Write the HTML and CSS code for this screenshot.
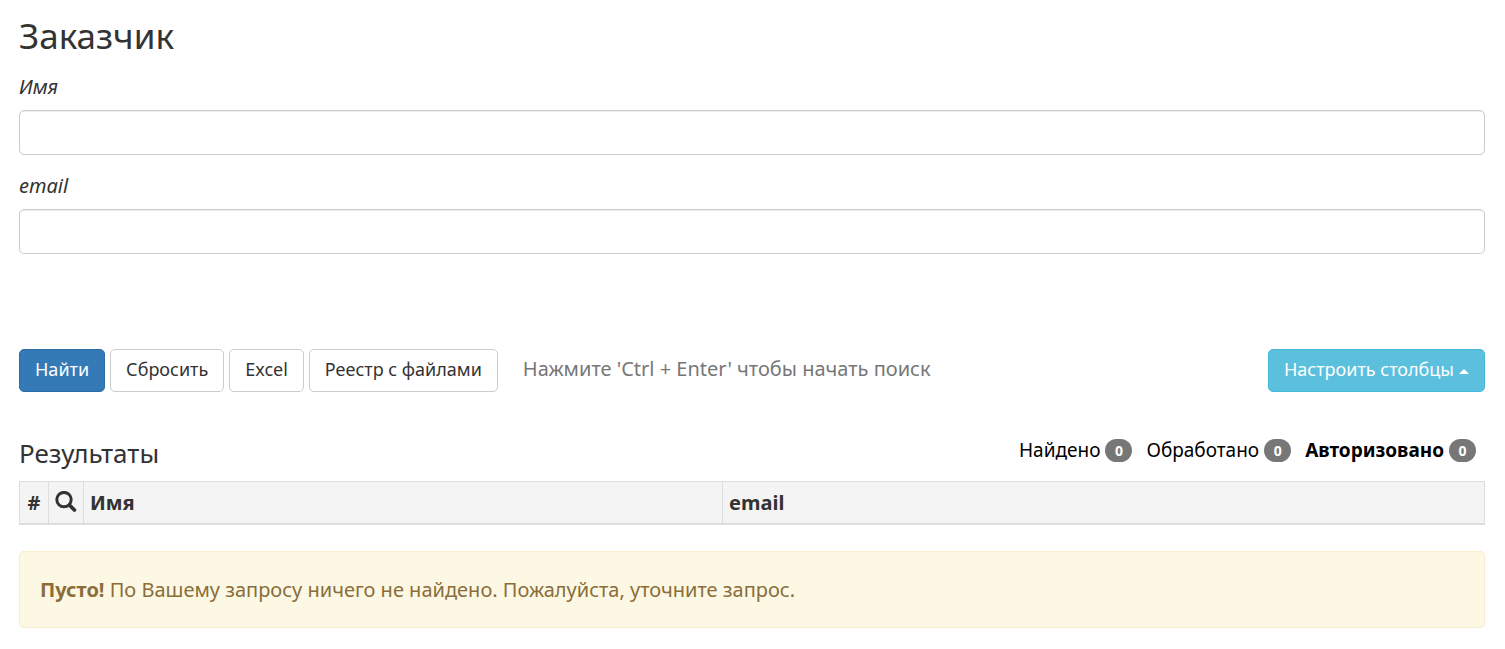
FILE: index.html
```html
<!DOCTYPE html>
<html lang="ru">
<head>
<meta charset="utf-8">
<title>Заказчик</title>
<link rel="stylesheet" href="styles.css">
</head>
<body>
<main class="page">
  <form class="search">
    <h1 class="title">Заказчик</h1>
    <div class="field">
      <label class="field-label" for="name">Имя</label>
      <input class="field-input" id="name" type="text">
    </div>
    <div class="field">
      <label class="field-label" for="email">email</label>
      <input class="field-input" id="email" type="text">
    </div>
    <div class="toolbar">
      <button class="btn btn-primary" type="submit">Найти</button>
      <button class="btn" type="reset">Сбросить</button>
      <button class="btn" type="button">Excel</button>
      <button class="btn" type="button">Реестр с файлами</button>
      <span class="hint">Нажмите 'Ctrl + Enter' чтобы начать поиск</span>
      <button class="btn btn-info" type="button">Настроить столбцы<span class="caret"></span></button>
    </div>
  </form>
  <section class="results">
    <div class="results-head">
      <h2 class="results-title">Результаты</h2>
      <div class="counters">
        <span class="counter">Найдено <span class="badge">0</span></span>
        <span class="counter">Обработано <span class="badge">0</span></span>
        <strong class="counter">Авторизовано <span class="badge">0</span></strong>
      </div>
    </div>
    <table class="grid">
      <thead>
        <tr>
          <th class="col-num">#</th>
          <th class="col-view"><svg class="icon" viewBox="0 0 22 22" role="img" aria-label="Просмотр"><circle cx="9" cy="8.6" r="7.2" fill="none" stroke="currentColor" stroke-width="3"/><path d="M14.4 14l5 5" fill="none" stroke="currentColor" stroke-width="3.8" stroke-linecap="round"/></svg></th>
          <th class="col-name">Имя</th>
          <th>email</th>
        </tr>
      </thead>
    </table>
    <div class="alert" role="alert"><strong>Пусто!</strong> По Вашему запросу ничего не найдено. Пожалуйста, уточните запрос.</div>
  </section>
</main>
</body>
</html>
```
FILE: styles.css
```css
* {
  box-sizing: border-box;
}

body {
  margin: 0;
  background: #fff;
  color: #333;
  font-family: "Noto Sans", sans-serif;
  font-size: 20px;
  line-height: 27px;
}

.page {
  padding: 16px 20px 20px 19px;
}

.title {
  margin: 0 0 17px;
  font-size: 35px;
  font-weight: 400;
  line-height: 40px;
}

.field {
  display: flex;
  flex-direction: column;
  gap: 10px;
  margin-bottom: 17px;
}

.field-label {
  font-style: italic;
}

.field-input {
  width: 100%;
  height: 45px;
  padding: 8px 16px;
  border: 1px solid #ccc;
  border-radius: 5px;
  background: #fff;
  box-shadow: inset 0 1px 1px rgba(0, 0, 0, 0.075);
  color: #555;
  font: inherit;
}

.toolbar {
  display: flex;
  align-items: center;
  gap: 5px;
  margin-top: 95px;
}

.btn {
  display: flex;
  align-items: center;
  height: 43px;
  padding: 0 15px 2px;
  border: 1px solid #ccc;
  border-radius: 5px;
  background: #fff;
  color: #333;
  font: inherit;
  font-size: 18px;
  white-space: nowrap;
}

.btn-primary {
  border-color: #2e6da4;
  background: #337ab7;
  color: #fff;
}

.btn-info {
  gap: 5px;
  margin-left: auto;
  border-color: #46b8da;
  background: #5bc0de;
  color: #fff;
}

.caret {
  margin-top: 4px;
  border-right: 5px solid transparent;
  border-bottom: 5px solid #fff;
  border-left: 5px solid transparent;
}

.hint {
  margin-left: 20px;
  padding-bottom: 4px;
  color: #777;
}

.results {
  margin-top: 45px;
}

.results-head {
  display: flex;
  justify-content: space-between;
  align-items: flex-start;
  height: 44px;
}

.results-title {
  margin: 0;
  font-size: 26px;
  font-weight: 400;
  line-height: 32px;
}

.counters {
  display: flex;
  gap: 14px;
  padding-right: 9px;
  color: #000;
  font-size: 19px;
}

.counter {
  display: flex;
  align-items: center;
  gap: 5px;
}

.badge {
  width: 27px;
  border-radius: 12px;
  background: #777;
  color: #fff;
  font-size: 14px;
  font-weight: 700;
  line-height: 23px;
  text-align: center;
}

.grid {
  width: 100%;
  border-collapse: collapse;
  table-layout: fixed;
}

.grid th {
  height: 42px;
  padding: 0 6px;
  border: 1px solid #ddd;
  border-bottom-width: 2px;
  background: #f4f4f4;
  text-align: left;
}

.grid .col-num {
  width: 29px;
  text-align: center;
}

.grid .col-view {
  width: 35px;
}

.grid .col-name {
  width: 639px;
}

.icon {
  display: block;
  width: 22px;
  height: 22px;
}

.alert {
  margin-top: 26px;
  padding: 24px 20px;
  border: 1px solid #faebcc;
  border-radius: 5px;
  background: #fcf8e3;
  color: #8a6d3b;
}
```
